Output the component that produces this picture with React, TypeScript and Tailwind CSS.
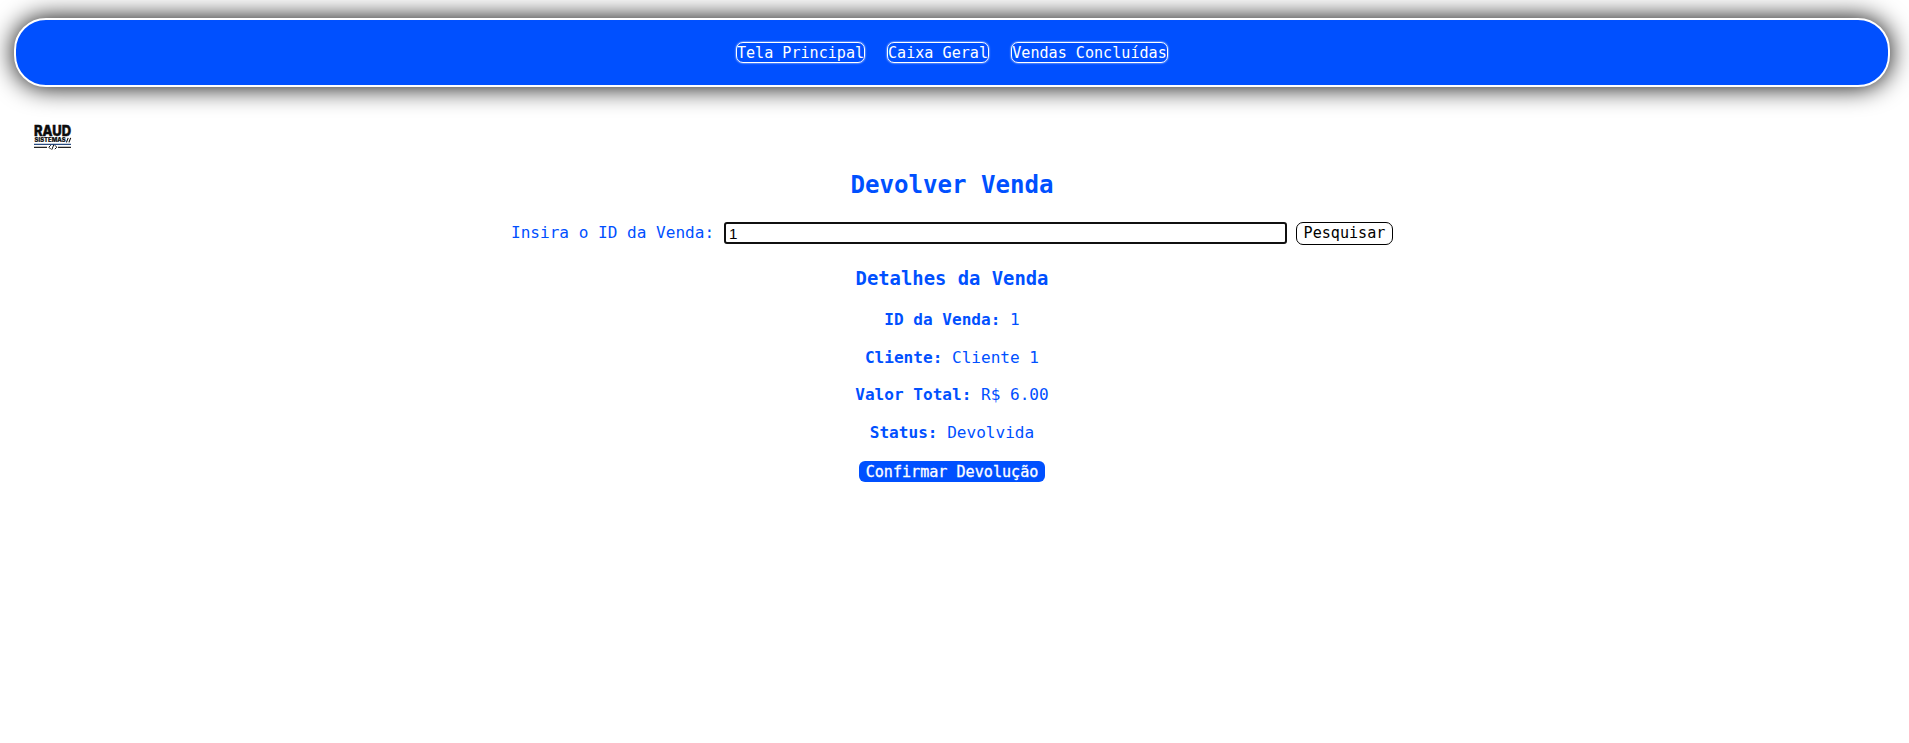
import { useState } from "react";

const links = [
  { label: "Tela Principal", width: "w-[129px]" },
  { label: "Caixa Geral", width: "w-[102px]" },
  { label: "Vendas Concluídas", width: "w-[157px]" },
];

const details = [
  { name: "ID da Venda:", value: "1" },
  { name: "Cliente:", value: "Cliente 1" },
  { name: "Valor Total:", value: "R$ 6.00" },
  { name: "Status:", value: "Devolvida" },
];

function Logo() {
  return (
    <svg className="ml-[34px] mt-[37px] block h-[27px] w-[38px] overflow-visible" viewBox="0 0 38 27" aria-label="Raud Sistemas">
      <text x="0" y="12" textLength="37" lengthAdjust="spacingAndGlyphs" fontFamily="Inter, sans-serif" fontWeight="800" fontSize="14.4" fill="#0c0c0c" stroke="#0c0c0c" strokeWidth="0.5">RAUD</text>
      <text x="0.6" y="18.2" textLength="31" lengthAdjust="spacingAndGlyphs" fontFamily="Inter, sans-serif" fontWeight="800" fontSize="5.8" fill="#0c0c0c" stroke="#0c0c0c" strokeWidth="0.2">SISTEMAS</text>
      <path d="M32.4 18.4L34.2 13.9M34.9 18.4L36.7 13.9" stroke="#0c0c0c" strokeWidth="1.1" />
      <path d="M0 20.4H37" stroke="#294b80" strokeWidth="1.2" />
      <path d="M0 23.4H13M24 23.4H37" stroke="#222" strokeWidth="1.1" />
      <path d="M16.8 21.2L14.8 23.2L16.8 25.2M20.8 21.2L22.8 23.2L20.8 25.2M19.8 20.7L17.8 25.7" fill="none" stroke="#111" strokeWidth="1" />
    </svg>
  );
}

export default function App() {
  const [id, setId] = useState("1");
  return (
    <div className="min-h-[743px] w-[1904px] bg-white pt-[18px] font-['DejaVu_Sans_Mono',monospace] text-[#0050ff]">
      <nav className="ml-[14px] flex h-[69px] w-[1876px] items-center justify-center gap-[22px] rounded-[32px] border-2 border-white bg-[#0050ff] shadow-[0_0_26px_#000]">
        {links.map((link) => (
          <a key={link.label} href="#" className={`${link.width} flex h-[21px] items-center justify-center whitespace-nowrap rounded-[7px] border border-white pt-[2px] text-[15.1px] leading-none text-white shadow-[0_0_2px_#fff]`}>
            {link.label}
          </a>
        ))}
      </nav>
      <Logo />
      <main className="flex flex-col items-center">
        <h1 className="mt-[18px] h-[32px] text-[24.1px] font-bold leading-[32px]">Devolver Venda</h1>
        <form className="mt-[20px] flex h-[24px] items-center" onSubmit={(e) => e.preventDefault()}>
          <label htmlFor="sale" className="mr-[9px] w-[204px] whitespace-nowrap text-[16.07px] leading-[24px]">Insira o ID da Venda:</label>
          <input id="sale" value={id} onChange={(e) => setId(e.target.value)} className="h-[22px] w-[563px] rounded-[3px] border-2 border-[#101010] bg-white px-[3px] font-['Liberation_Sans',sans-serif] text-[15.2px] leading-none text-black outline-none" />
          <button className="ml-[9px] flex h-[23px] w-[97px] items-center justify-center rounded-[7px] border border-black bg-white pt-[1px] text-[15.1px] leading-none text-black">Pesquisar</button>
        </form>
        <h2 className="mt-[22px] h-[24px] text-[18.85px] font-bold leading-[24px]">Detalhes da Venda</h2>
        <dl className="mt-[19px] flex flex-col items-center gap-[17.6px] text-[16.07px] leading-[20px]">
          {details.map((item) => (
            <div key={item.name} className="flex h-[20px] gap-[9.7px] whitespace-nowrap">
              <dt className="font-bold">{item.name}</dt>
              <dd>{item.value}</dd>
            </div>
          ))}
        </dl>
        <button className="mt-[18.2px] flex h-[21px] w-[186px] items-center justify-center rounded-[6px] bg-[#0050ff] pt-[2px] text-[15.1px] leading-none text-white [-webkit-text-stroke:0.3px_white]">Confirmar Devolução</button>
      </main>
    </div>
  );
}
